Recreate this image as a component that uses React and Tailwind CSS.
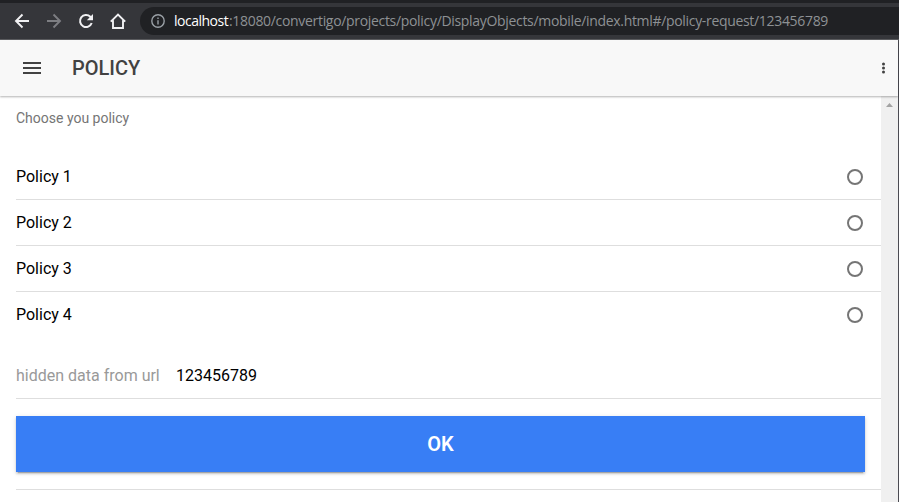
const POLICIES = ["Policy 1", "Policy 2", "Policy 3", "Policy 4"];

function BrowserBar() {
  return (
    <div className="flex h-10 shrink-0 items-center border-t-[3px] border-b border-t-[#202124] border-b-[#5c5d60] bg-[#35363a] pl-[14px]">
      <div className="flex items-center gap-4 text-[#f1f1f3]">
        <svg className="size-4" viewBox="0 0 16 16" fill="none" stroke="currentColor" strokeWidth="1.9">
          <path d="M15 8H2.5M8.5 1.5 2 8l6.500 6.500" />
        </svg>
        <svg className="size-4 text-[#7d7e82]" viewBox="0 0 16 16" fill="none" stroke="currentColor" strokeWidth="1.9">
          <path d="M1 8h12.500M7.500 1.500 14 8l-6.500 6.500" />
        </svg>
        <svg className="size-4" viewBox="0 0 16 16">
          <path fill="none" stroke="currentColor" strokeWidth="2" d="M13.700 10a6 6 0 1 1-1.400-6.200l1.200 1.200" />
          <path fill="currentColor" d="M15 1v6.200H8.800z" />
        </svg>
        <svg className="size-4" viewBox="0 0 16 16" fill="none" stroke="currentColor" strokeWidth="1.9">
          <path d="M.8 8.700 8 1.500l7.200 7.200M3 7.200V15h10V7.200" />
        </svg>
      </div>
      <div className="ml-[14px] flex h-7 flex-1 items-center overflow-hidden rounded-l-full bg-[#202124] pl-[11px]">
        <svg className="size-[14px] shrink-0" viewBox="0 0 14 14" fill="none" stroke="#9aa0a6" strokeWidth="1.4">
          <circle cx="7" cy="7" r="6.200" />
          <path d="M7 6.200v4.300M7 3.500V5" />
        </svg>
        <div className="ml-[9px] flex whitespace-nowrap font-['Open_Sans','Noto_Sans',sans-serif] text-[14px] leading-5 text-[#8e9194]">
          <span className="w-[55px] tracking-[-0.5px] text-white">localhost</span>
          <span className="tracking-[-0.32px]">:18080/convertigo/projects/policy/DisplayObjects/mobile/index.html#/policy-request/123456789</span>
        </div>
      </div>
    </div>
  );
}

function Header() {
  return (
    <header className="relative z-10 flex h-14 shrink-0 items-center bg-[#f8f8f8] pr-[13px] pl-[23px] text-[#424242] shadow-[0_1px_2px_rgba(0,0,0,0.3)]">
      <div className="flex w-[18px] flex-col gap-[3px]">
        <span className="h-0.5 bg-current" />
        <span className="h-0.5 bg-current" />
        <span className="h-0.5 bg-current" />
      </div>
      <h1 className="ml-[31px] flex-1 text-[20px] leading-6 font-medium">POLICY</h1>
      <svg className="h-3 w-[3px]" viewBox="0 0 3 12" fill="currentColor">
        <circle cx="1.500" cy="2" r="1.500" />
        <circle cx="1.500" cy="6" r="1.500" />
        <circle cx="1.500" cy="10" r="1.500" />
      </svg>
    </header>
  );
}

export default function App() {
  return (
    <div className="flex h-[502px] w-[899px] flex-col overflow-hidden bg-white font-['Roboto',sans-serif]">
      <BrowserBar />
      <div className="flex min-h-0 flex-1 flex-col border-r border-[#4b4b52]">
        <Header />
        <div className="flex min-h-0 flex-1">
          <main className="flex-1 pl-4">
            <p className="pt-[13px] text-[14px] leading-[18px] text-[#757575]">Choose you policy</p>
            <div className="mt-[27px]">
              {POLICIES.map((name, i) => (
                <div
                  key={name}
                  className={`flex h-[46px] items-center justify-between pr-[18px] text-[16px] text-black ${i < 3 ? "border-b border-[#dedede]" : ""}`}
                >
                  <span>{name}</span>
                  <span className="size-4 rounded-full border-2 border-[#757575]" />
                </div>
              ))}
            </div>
            <div className="mt-[15px] flex h-[46px] items-center border-b border-[#dedede] text-[16px]">
              <span className="w-40 text-[#999]">hidden data from url</span>
              <span className="text-black">123456789</span>
            </div>
            <div className="h-[91px] border-b border-[#dedede] pt-[17px] pr-4">
              <button className="h-14 w-full bg-[#387ef5] text-[20px] font-semibold text-white shadow-[0_2px_2px_0_rgba(0,0,0,0.14),0_3px_1px_-2px_rgba(0,0,0,0.2),0_1px_5px_0_rgba(0,0,0,0.12)]">
                OK
              </button>
            </div>
          </main>
          <div className="flex w-[17px] justify-center bg-[#f0f0f0] pt-[7px]">
            <svg className="h-1 w-[7px]" viewBox="0 0 7 4" fill="#a3a3a3">
              <path d="M0 4 3.500 0 7 4z" />
            </svg>
          </div>
        </div>
      </div>
    </div>
  );
}
